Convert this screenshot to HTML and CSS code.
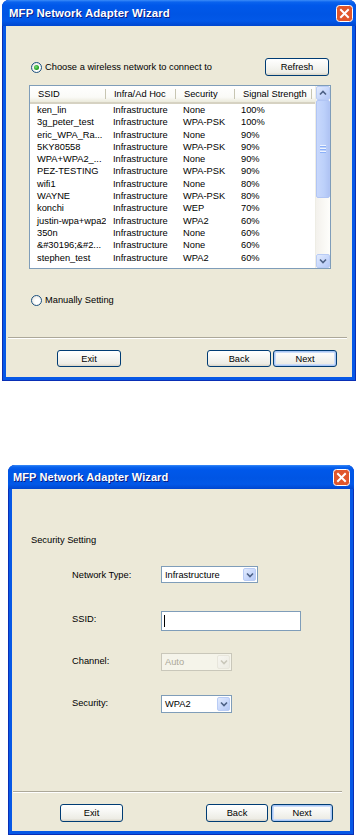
FILE: index.html
```html
<!DOCTYPE html>
<html>
<head>
<meta charset="utf-8">
<title>MFP Network Adapter Wizard</title>
<link rel="stylesheet" href="styles.css">
</head>
<body>
<div class="win win1">
  <div class="titlebar">
    <span class="title">MFP Network Adapter Wizard</span>
    <span class="close"><svg width="17" height="17" viewBox="0 0 17 17"><rect x="0.5" y="0.5" width="16" height="16" rx="3" fill="#E0562B" stroke="#fff"/><path d="M5 5 L12 12 M12 5 L5 12" stroke="#fff" stroke-width="2" stroke-linecap="square"/></svg></span>
  </div>
  <div class="client">
    <div class="toprow">
      <div class="radio"><span class="rb on"></span><span>Choose a wireless network to connect to</span></div>
      <div class="btn refresh">Refresh</div>
    </div>
    <div class="listbox">
      <div class="lv">
        <div class="lvhead">
          <span class="hc">SSID</span><span class="hc">Infra/Ad Hoc</span><span class="hc">Security</span><span class="hc">Signal Strength</span>
        </div>
        <div class="lvrow"><span>ken_lin</span><span>Infrastructure</span><span>None</span><span>100%</span></div>
        <div class="lvrow"><span>3g_peter_test</span><span>Infrastructure</span><span>WPA-PSK</span><span>100%</span></div>
        <div class="lvrow"><span>eric_WPA_Ra...</span><span>Infrastructure</span><span>None</span><span>90%</span></div>
        <div class="lvrow"><span>5KY80558</span><span>Infrastructure</span><span>WPA-PSK</span><span>90%</span></div>
        <div class="lvrow"><span>WPA+WPA2_...</span><span>Infrastructure</span><span>None</span><span>90%</span></div>
        <div class="lvrow"><span>PEZ-TESTING</span><span>Infrastructure</span><span>WPA-PSK</span><span>90%</span></div>
        <div class="lvrow"><span>wifi1</span><span>Infrastructure</span><span>None</span><span>80%</span></div>
        <div class="lvrow"><span>WAYNE</span><span>Infrastructure</span><span>WPA-PSK</span><span>80%</span></div>
        <div class="lvrow"><span>konchi</span><span>Infrastructure</span><span>WEP</span><span>70%</span></div>
        <div class="lvrow"><span>justin-wpa+wpa2</span><span>Infrastructure</span><span>WPA2</span><span>60%</span></div>
        <div class="lvrow"><span>350n</span><span>Infrastructure</span><span>None</span><span>60%</span></div>
        <div class="lvrow"><span>&amp;#30196;&amp;#2...</span><span>Infrastructure</span><span>None</span><span>60%</span></div>
        <div class="lvrow"><span>stephen_test</span><span>Infrastructure</span><span>WPA2</span><span>60%</span></div>
      </div>
      <div class="vscroll">
        <div class="sbtn"><svg width="8" height="6" viewBox="0 0 8 6"><path d="M1 4.5 L4 1.5 L7 4.5" fill="none" stroke="#4D6185" stroke-width="1.6"/></svg></div>
        <div class="track">
          <div class="thumb"><span class="grip"></span><span class="grip"></span><span class="grip"></span></div>
        </div>
        <div class="sbtn"><svg width="8" height="6" viewBox="0 0 8 6"><path d="M1 1.5 L4 4.5 L7 1.5" fill="none" stroke="#4D6185" stroke-width="1.6"/></svg></div>
      </div>
    </div>
    <div class="manualrow">
      <div class="radio"><span class="rb"></span><span>Manually Setting</span></div>
    </div>
    <div class="sep sep1"></div>
    <div class="btnrow btnrow1">
      <div class="btn exit">Exit</div>
      <div class="btn back">Back</div>
      <div class="btn next default">Next</div>
    </div>
  </div>
</div>

<div class="win win2">
  <div class="titlebar">
    <span class="title">MFP Network Adapter Wizard</span>
    <span class="close"><svg width="17" height="17" viewBox="0 0 17 17"><rect x="0.5" y="0.5" width="16" height="16" rx="3" fill="#E0562B" stroke="#fff"/><path d="M5 5 L12 12 M12 5 L5 12" stroke="#fff" stroke-width="2" stroke-linecap="square"/></svg></span>
  </div>
  <div class="client">
    <div class="sechead">Security Setting</div>
    <div class="formrow r1">
      <span class="flabel">Network Type:</span>
      <div class="combo w97"><span class="ctext">Infrastructure</span><span class="cbtn"><svg width="8" height="6" viewBox="0 0 8 6"><path d="M1 1.5 L4 4.5 L7 1.5" fill="none" stroke="#4D6185" stroke-width="1.6"/></svg></span></div>
    </div>
    <div class="formrow r2">
      <span class="flabel">SSID:</span>
      <div class="textbox"><span class="caret"></span></div>
    </div>
    <div class="formrow r3">
      <span class="flabel">Channel:</span>
      <div class="combo w71 disabled"><span class="ctext">Auto</span><span class="cbtn"><svg width="8" height="6" viewBox="0 0 8 6"><path d="M1 1.5 L4 4.5 L7 1.5" fill="none" stroke="#C9C7BA" stroke-width="1.6"/></svg></span></div>
    </div>
    <div class="formrow r4">
      <span class="flabel">Security:</span>
      <div class="combo w71"><span class="ctext">WPA2</span><span class="cbtn"><svg width="8" height="6" viewBox="0 0 8 6"><path d="M1 1.5 L4 4.5 L7 1.5" fill="none" stroke="#4D6185" stroke-width="1.6"/></svg></span></div>
    </div>
    <div class="sep sep2"></div>
    <div class="btnrow btnrow2">
      <div class="btn exit">Exit</div>
      <div class="btn back">Back</div>
      <div class="btn next default">Next</div>
    </div>
  </div>
</div>
</body>
</html>
```

FILE: styles.css
```css
html, body {
  margin: 0;
  padding: 0;
  background: #ffffff;
}
body {
  font-family: "Liberation Sans", Arial, sans-serif;
  font-size: 9.3px;
  color: #000;
}

.win {
  box-sizing: border-box;
  display: flex;
  flex-direction: column;
  background: #0758E6;
  border-radius: 7px 7px 0 0;
  box-shadow: inset 0 0 0 1px #0A2FB5;
}
.win1 {
  margin-left: 2px;
  width: 354px;
  height: 381px;
}
.win2 {
  margin: 84px 0 0 8px;
  width: 346px;
  height: 370px;
}

.titlebar {
  display: flex;
  align-items: center;
  justify-content: space-between;
  border-radius: 7px 7px 0 0;
  background: linear-gradient(#3B8CF8 0%, #0A63EE 8%, #0058EA 20%, #0055E4 55%, #0258E8 80%, #0046CF 100%);
}
.win1 .titlebar {
  height: 26px;
  padding: 0 3px 0 7px;
}
.win2 .titlebar {
  height: 24px;
  padding: 0 4px 0 5px;
}
.title {
  color: #fff;
  font-weight: bold;
  font-size: 11.4px;
  text-shadow: 1px 1px 0 #0A1C83;
  letter-spacing: 0.1px;
}
.win2 .title {
  font-size: 11px;
}
.close {
  display: flex;
  width: 17px;
  height: 17px;
}

.client {
  flex: 1;
  margin: 0 4px 4px;
  background: #ECE9D8;
  display: flex;
  flex-direction: column;
}

/* radio */
.radio {
  display: flex;
  align-items: center;
  gap: 3px;
  line-height: 12px;
}
.rb {
  box-sizing: border-box;
  width: 11px;
  height: 11px;
  border-radius: 50%;
  border: 1px solid #1C5180;
  background: radial-gradient(circle at 60% 60%, #ffffff 30%, #DCDBD4 100%);
  display: flex;
  align-items: center;
  justify-content: center;
}
.rb.on::after {
  content: "";
  width: 5px;
  height: 5px;
  border-radius: 50%;
  background: radial-gradient(circle at 40% 40%, #7FDE7C 0%, #21A121 60%, #138A13 100%);
}

/* buttons */
.btn {
  box-sizing: border-box;
  display: flex;
  align-items: center;
  justify-content: center;
  border: 1px solid #003C74;
  border-radius: 3px;
  background: linear-gradient(#FFFFFF 0%, #F7F7F4 40%, #EDECE5 85%, #D8D4C6 100%);
  color: #000;
}
.btn.default {
  box-shadow: inset 0 0 0 1px #A8C6F5, inset 0 0 0 2px #CBDCF8;
}

/* dialog 1 */
.toprow {
  margin-top: 32px;
  height: 18px;
  display: flex;
  align-items: center;
  justify-content: space-between;
  padding: 0 23px 0 25px;
}
.refresh {
  width: 64px;
  height: 18px;
}

.listbox {
  box-sizing: border-box;
  margin: 9px 0 0 23px;
  width: 302px;
  height: 184px;
  border: 1px solid #7F9DB9;
  background: #fff;
  display: flex;
  overflow: hidden;
}
.lv {
  flex: 1;
  display: flex;
  flex-direction: column;
}
.lvhead {
  box-sizing: border-box;
  height: 18px;
  display: grid;
  grid-template-columns: 76px 70px 59px 77px;
  background: linear-gradient(#FFFFFF 0%, #FAFAF7 70%, #EBEADB 100%);
  border-bottom: 2px solid #D6D2C2;
}
.hc {
  display: flex;
  align-items: center;
  padding-left: 8px;
  box-sizing: border-box;
  position: relative;
  white-space: nowrap;
  border-right: 1px solid #C7C5B2;
  margin: 3px 0;
}
.hc:first-child {
  padding-left: 8px;
}
.lvrow {
  height: 12.3px;
  line-height: 12.3px;
  display: grid;
  grid-template-columns: 76px 70px 59px 77px;
  white-space: nowrap;
}
.lvrow span {
  padding-left: 7px;
  overflow: hidden;
}
.lvrow span:last-child {
  padding-left: 6px;
}

.vscroll {
  width: 14px;
  display: flex;
  flex-direction: column;
  background: #FAF9F4;
  border-left: 1px solid #EEEDE5;
}
.sbtn {
  box-sizing: border-box;
  height: 14px;
  display: flex;
  align-items: center;
  justify-content: center;
  border: 1px solid #B9CCF5;
  border-radius: 2px;
  background: linear-gradient(135deg, #E2EBFD 0%, #C6D6FB 60%, #B5C8F5 100%);
}
.track {
  flex: 1;
  display: flex;
  flex-direction: column;
  background: linear-gradient(90deg, #F3F1EC, #FEFEFB);
}
.thumb {
  box-sizing: border-box;
  height: 98px;
  border: 1px solid #B1C5F4;
  border-radius: 2px;
  background: linear-gradient(90deg, #C8D8FC 0%, #BCD0FA 60%, #B0C4F4 100%);
  display: flex;
  flex-direction: column;
  align-items: center;
  justify-content: center;
  gap: 1px;
}
.grip {
  width: 6px;
  height: 1px;
  background: #EEF4FE;
  border-bottom: 1px solid #8CB0F8;
}

.manualrow {
  margin-top: 25px;
  padding-left: 25px;
  height: 12px;
}

.sep {
  height: 0;
  border-top: 1px solid #ACA899;
  border-bottom: 1px solid #FFFFFF;
}
.sep1 {
  margin: 31px 5px 0 2px;
}

.btnrow {
  display: flex;
}
.btnrow1 {
  margin-top: 11px;
  padding-left: 51px;
}
.btnrow1 .btn {
  width: 64px;
  height: 17px;
}
.btnrow1 .back {
  margin-left: 86px;
}
.btnrow1 .next {
  margin-left: 2px;
}

/* dialog 2 */
.sechead {
  margin-top: 45px;
  padding-left: 19px;
  line-height: 12px;
}
.formrow {
  display: flex;
  align-items: flex-start;
  padding-left: 60px;
}
.flabel {
  width: 89px;
  line-height: 12px;
  padding-top: 2px;
}
.r1 { margin-top: 20px; }
.r2 { margin-top: 28px; }
.r3 { margin-top: 22px; }
.r4 { margin-top: 24px; }
.r1 .flabel { padding-top: 3px; }

.combo {
  box-sizing: border-box;
  border: 1px solid #7F9DB9;
  background: #fff;
  display: flex;
  align-items: stretch;
  padding: 1px;
}
.combo.w97 {
  width: 97px;
  height: 17px;
}
.combo.w71 {
  width: 71px;
  height: 18px;
}
.ctext {
  flex: 1;
  display: flex;
  align-items: center;
  padding-left: 2px;
  white-space: nowrap;
}
.cbtn {
  box-sizing: border-box;
  width: 13px;
  display: flex;
  align-items: center;
  justify-content: center;
  border: 1px solid #B9CCF5;
  border-radius: 2px;
  background: linear-gradient(135deg, #E2EBFD 0%, #C6D6FB 60%, #B5C8F5 100%);
}
.combo.disabled {
  border-color: #C9C7BA;
  background: #F5F4EA;
}
.combo.disabled .ctext {
  color: #ACA899;
}
.combo.disabled .cbtn {
  border-color: #E8E6DC;
  background: linear-gradient(135deg, #F7F6F0, #ECEBE3);
}

.textbox {
  box-sizing: border-box;
  width: 140px;
  height: 20px;
  border: 1px solid #7F9DB9;
  background: #fff;
  display: flex;
  align-items: center;
  padding-left: 2px;
}
.caret {
  width: 1px;
  height: 12px;
  background: #000;
}

.sep2 {
  margin: 78px 8px 0 1px;
}
.btnrow2 {
  margin-top: 11px;
  padding-left: 48px;
}
.btnrow2 .btn {
  width: 62px;
  height: 18px;
}
.btnrow2 .exit {
  width: 63px;
}
.btnrow2 .back {
  margin-left: 83px;
}
.btnrow2 .next {
  margin-left: 3px;
}
```
